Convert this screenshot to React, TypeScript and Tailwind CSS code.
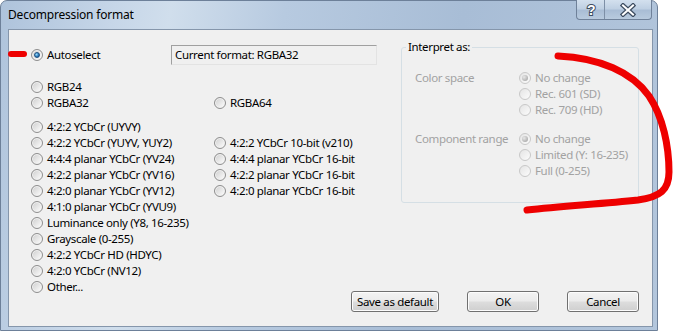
import React from "react";
import clsx from "clsx";

type RadioProps = { checked?: boolean; disabled?: boolean };

const Radio = ({ checked, disabled }: RadioProps) => (
  <span
    className={clsx(
      "flex h-[12px] w-[12px] shrink-0 items-center justify-center rounded-full border",
      disabled
        ? "border-[#c8c8c8] bg-[linear-gradient(135deg,#e4e4e4,#fcfcfc)]"
        : "border-[#8e8e8e] bg-[linear-gradient(135deg,#cdcdcd,#ffffff)] shadow-[inset_0_0_0_1px_#f2f2f2]"
    )}
  >
    {checked && (
      <span
        className={clsx(
          "h-[6px] w-[6px] rounded-full",
          disabled
            ? "bg-[radial-gradient(circle_at_35%_35%,#e8e8e8,#9a9a9a)]"
            : "border border-[#1c4f80] bg-[radial-gradient(circle_at_35%_35%,#9be0ff,#2a77b8_60%,#174f86)]"
        )}
      />
    )}
  </span>
);

const Option = ({
  label,
  checked,
  disabled,
  className,
}: RadioProps & { label: string; className?: string }) => (
  <div className={clsx("flex h-4 items-center gap-1 whitespace-nowrap", className)}>
    <Radio checked={checked} disabled={disabled} />
    <span className={disabled ? "text-[#a2a2a2]" : "text-black"}>{label}</span>
  </div>
);

const Button = ({ label, className }: { label: string; className?: string }) => (
  <button
    type="button"
    className={clsx(
      "flex h-[21px] items-center justify-center rounded-[3px] border border-[#707070] bg-[linear-gradient(#f3f3f3,#ebebeb_48%,#dddddd_52%,#cfcfcf)] text-black shadow-[inset_0_0_0_1px_#fcfcfc]",
      className
    )}
  >
    {label}
  </button>
);

const leftFormats = [
  "4:2:2 YCbCr (UYVY)",
  "4:2:2 YCbCr (YUYV, YUY2)",
  "4:4:4 planar YCbCr (YV24)",
  "4:2:2 planar YCbCr (YV16)",
  "4:2:0 planar YCbCr (YV12)",
  "4:1:0 planar YCbCr (YVU9)",
  "Luminance only (Y8, 16-235)",
  "Grayscale (0-255)",
  "4:2:2 YCbCr HD (HDYC)",
  "4:2:0 YCbCr (NV12)",
  "Other...",
];

const rightFormats = [
  "4:2:2 YCbCr 10-bit (v210)",
  "4:4:4 planar YCbCr 16-bit",
  "4:2:2 planar YCbCr 16-bit",
  "4:2:0 planar YCbCr 16-bit",
];

const App = () => {
  return (
    <div className="relative h-[332px] w-[676px] overflow-hidden bg-white font-['Segoe_UI','Noto_Sans',sans-serif] text-[11.5px] leading-none tracking-[-0.35px]">
      {/* window frame */}
      <div className="flex h-[331px] w-[658px] flex-col rounded-t-[7px] border border-[#6d8099] bg-[linear-gradient(100deg,#aec3db_0%,#c6d6e8_16%,#d0deec_24%,#b7cae0_40%,#a8bdd6_65%,#b3c6dc_100%)] pb-[3px] pl-[7px] pr-[4px]">
        {/* title bar */}
        <div className="flex h-[28px] items-start">
          <span className="self-center text-[12px] tracking-[-0.2px] text-black">Decompression format</span>
          <div className="ml-auto mr-[1px] -mt-[1px] flex h-[20px] overflow-hidden rounded-b-[4px] border border-t-0 border-[#6f8199] bg-[linear-gradient(#d3e0ee,#bfd0e3_45%,#a9bdd5_55%,#b8cade)]">
            <div className="flex w-[28px] items-center justify-center border-r border-[#7d8fa6]">
              <svg width="12" height="16" viewBox="0 0 12 16">
                <text
                  x="6"
                  y="13"
                  textAnchor="middle"
                  fontSize="14"
                  fontWeight="bold"
                  fontFamily="Liberation Sans, sans-serif"
                  fill="#ffffff"
                  stroke="#3d4c60"
                  strokeWidth="2"
                  paintOrder="stroke"
                >
                  ?
                </text>
              </svg>
            </div>
            <div className="flex w-[46px] items-center justify-center">
              <svg width="16" height="14" viewBox="0 0 16 14">
                <path d="M3 2.5 L13 11.5 M13 2.5 L3 11.5" stroke="#3d4c60" strokeWidth="4.5" strokeLinecap="square" />
                <path d="M3 2.5 L13 11.5 M13 2.5 L3 11.5" stroke="#ffffff" strokeWidth="2" strokeLinecap="square" />
              </svg>
            </div>
          </div>
        </div>

        {/* client area */}
        <div className="flex flex-1 border border-[#8596ab] bg-[#f0f0f0]">
          <div className="flex w-[383px] flex-col pl-[22px]">
            <div className="mt-[14px] flex h-[21px] items-center">
              <Option label="Autoselect" checked className="w-[140px]" />
              <div className="flex h-[20px] w-[206px] items-center border border-[#a0a0a0] border-b-[#e3e3e3] border-r-[#e3e3e3] pl-[3px] text-black">
                Current format: RGBA32
              </div>
            </div>

            <div className="mt-[14px] grid grid-cols-[183px_1fr]">
              <Option label="RGB24" />
              <div />
              <Option label="RGBA32" />
              <Option label="RGBA64" />
            </div>

            <div className="mt-[8px] flex">
              <div className="flex w-[183px] flex-col">
                {leftFormats.map((f) => (
                  <Option key={f} label={f} />
                ))}
              </div>
              <div className="mt-4 flex flex-col">
                {rightFormats.map((f) => (
                  <Option key={f} label={f} />
                ))}
              </div>
            </div>
          </div>

          <div className="flex w-[260px] flex-col pb-[14px]">
            <div className="relative ml-[9px] mt-[17px] h-[156px] w-[238px] rounded-[3px] border border-[#d5dfe5] pl-[13px] pt-[22px]">
              <span className="absolute -top-[7px] left-[4px] bg-[#f0f0f0] px-[2px] text-black">Interpret as:</span>
              <div className="flex">
                <div className="flex h-4 w-[104px] items-center text-[#a2a2a2]">Color space</div>
                <div className="flex flex-col">
                  <Option label="No change" checked disabled />
                  <Option label="Rec. 601 (SD)" disabled />
                  <Option label="Rec. 709 (HD)" disabled />
                </div>
              </div>
              <div className="mt-[13px] flex">
                <div className="flex h-4 w-[104px] items-center text-[#a2a2a2]">Component range</div>
                <div className="flex flex-col">
                  <Option label="No change" checked disabled />
                  <Option label="Limited (Y: 16-235)" disabled />
                  <Option label="Full (0-255)" disabled />
                </div>
              </div>
            </div>

            <div className="-ml-[41px] mt-auto flex justify-end gap-[28px] pr-[13px]">
              <Button label="Save as default" className="w-[88px]" />
              <Button label="OK" className="w-[72px]" />
              <Button label="Cancel" className="w-[72px]" />
            </div>
          </div>
        </div>
      </div>

      {/* red annotations */}
      <svg className="pointer-events-none absolute inset-0" width="676" height="332" viewBox="0 0 676 332">
        <path d="M11 54 L24 54" stroke="#ee0000" strokeWidth="6" strokeLinecap="round" />
        <path
          d="M558 56 C600 58 632 72 649 96 C663 117 669 146 669 172 C669 190 660 197 638 200 C600 204 562 206 527 210"
          fill="none"
          stroke="#ee0000"
          strokeWidth="7"
          strokeLinecap="round"
        />
      </svg>
    </div>
  );
};

export default App;
